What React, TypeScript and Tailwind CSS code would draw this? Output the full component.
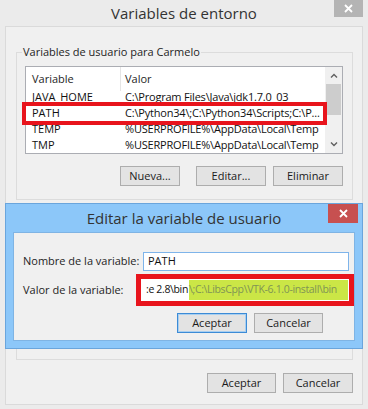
const font = { fontFamily: '"Open Sans", "Noto Sans", sans-serif' };

function WinButton({ label, w, primary }: { label: string; w: string; primary?: boolean }) {
  return (
    <div
      className={`${w} h-[20px] flex items-center justify-center text-[11px] text-[#1b1b1b] bg-[#e3e3e3] border ${
        primary ? "border-[#3c8bd6] shadow-[inset_0_0_0_1px_#a9cff0]" : "border-[#adadad]"
      }`}
    >
      {label}
    </div>
  );
}

function CloseGlyph() {
  return (
    <svg width="9" height="9" viewBox="0 0 9 9">
      <path d="M1 1L8 8M8 1L1 8" stroke="#fff" strokeWidth="1.8" />
    </svg>
  );
}

function ScrollArrow({ up }: { up?: boolean }) {
  return (
    <div className="h-[17px] flex items-center justify-center">
      <svg width="8" height="5" viewBox="0 0 8 5">
        <path d={up ? "M1 4.5L4 1.5L7 4.5" : "M1 0.5L4 3.5L7 0.5"} fill="none" stroke="#606060" strokeWidth="1.4" />
      </svg>
    </div>
  );
}

const rows = [
  { name: "JAVA_HOME", value: "C:\\Program Files\\Java\\jdk1.7.0_03" },
  { name: "PATH", value: "C:\\Python34\\;C:\\Python34\\Scripts;C:\\P..." },
  { name: "TEMP", value: "%USERPROFILE%\\AppData\\Local\\Temp" },
  { name: "TMP", value: "%USERPROFILE%\\AppData\\Local\\Temp" },
];

function VariableList() {
  return (
    <div className="ml-[8px] mt-[13px] w-[318px] h-[88px] border border-[#abadb3] bg-white flex overflow-hidden">
      <div className="flex-1 flex flex-col overflow-hidden">
        <div className="relative z-10 h-[24px] shrink-0 flex items-center bg-white text-[11px] text-[#1e1e1e]">
          <div className="w-[95px] h-full flex items-center pl-[6px] border-r border-[#e5e5e5]">Variable</div>
          <div className="pl-[4px]">Valor</div>
        </div>
        <div className="mt-[-2px] flex flex-col">
          {rows.map((r) => (
            <div key={r.name} className="h-[16px] shrink-0 flex items-center text-[11px] text-[#111] whitespace-nowrap">
              <div className="w-[95px] pl-[6px]">{r.name}</div>
              <div className="pl-[4px] tracking-[-0.2px]">{r.value}</div>
            </div>
          ))}
        </div>
      </div>
      <div className="w-[17px] bg-[#f0f0f0] flex flex-col">
        <ScrollArrow up />
        <div className="h-[31px] mx-[1px] bg-[#cdcdcd]" />
        <div className="flex-1" />
        <ScrollArrow />
      </div>
    </div>
  );
}

function GroupBox({ title, children, className }: { title?: string; children?: React.ReactNode; className: string }) {
  return (
    <div className={`relative ml-[10px] w-[337px] h-[148px] border border-[#dcdcdc] ${className}`}>
      {title && (
        <div className="absolute left-[5px] top-[-9px] px-[1px] bg-[#f0f0f0] text-[11px] text-[#1e1e1e] leading-[16px]">
          {title}
        </div>
      )}
      {children}
    </div>
  );
}

function EditDialog() {
  return (
    <div className="absolute left-[5px] top-[203px] w-[358px] h-[146px] bg-[#8cc7f9] border border-[#6aa5dc] flex flex-col">
      <div className="relative h-[28px] shrink-0 flex items-center justify-center text-[15px] text-[#333]">
        Editar la variable de usuario
        <div className="absolute right-[4px] top-0 w-[30px] h-[19px] bg-[#c75050] flex items-center justify-center">
          <CloseGlyph />
        </div>
      </div>
      <div className="mx-[7px] h-[109px] bg-[#f0f0f0] border border-[#7fb4e4]">
        <div className="flex items-center mt-[19px] h-[19px]">
          <div className="w-[129px] pl-[9px] text-[11px] text-[#1e1e1e]">Nombre de la variable:</div>
          <div className="w-[206px] h-[19px] bg-white border border-[#7eb4ea] flex items-center pl-[4px] text-[11px] text-[#111]">
            PATH
          </div>
        </div>
        <div className="flex items-center mt-[3px] h-[32px]">
          <div className="w-[122px] pl-[9px] text-[11px] text-[#1e1e1e]">Valor de la variable:</div>
          <div className="w-[218px] h-[32px] border-[5px] border-[#e8141c] p-[1px] bg-white">
            <div className="h-full bg-white flex items-center text-[10.5px] tracking-[-0.35px] whitespace-nowrap overflow-hidden">
              <span className="pl-[4px] pr-[1px] text-[#111]">:e 2.8\bin</span>
              <span className="h-full flex-1 flex items-center bg-[#cbe646] text-[#7f9455]">
                \;C:\LibsCpp\VTK-6.1.0-install\bin
              </span>
            </div>
          </div>
        </div>
        <div className="flex justify-end gap-[7px] mt-[7px] pr-[31px]">
          <WinButton label="Aceptar" w="w-[70px]" primary />
          <WinButton label="Cancelar" w="w-[69px]" />
        </div>
      </div>
    </div>
  );
}

export default function App() {
  return (
    <div className="relative w-[368px] h-[409px] bg-[#ebebeb] overflow-hidden" style={font}>
      <div className="relative h-[26px] flex items-center justify-center text-[15px] text-[#333]">
        Variables de entorno
        <div className="absolute right-[5px] top-0 w-[29px] h-[17px] bg-[#b4b4b4] flex items-center justify-center">
          <CloseGlyph />
        </div>
      </div>
      <div className="ml-[5px] w-[358px] h-[379px] bg-[#f0f0f0] border border-[#dadada] flex flex-col">
        <GroupBox title="Variables de usuario para Carmelo" className="mt-[25px]">
          <VariableList />
          <div className="flex justify-end mt-[12px] pr-[9px]">
            <WinButton label="Nueva..." w="w-[60px]" />
            <div className="w-[16px]" />
            <WinButton label="Editar..." w="w-[70px]" />
            <div className="w-[7px]" />
            <WinButton label="Eliminar" w="w-[70px]" />
          </div>
        </GroupBox>
        <GroupBox className="mt-[12px]" />
        <div className="flex justify-end gap-[7px] mt-[13px] pr-[9px]">
          <WinButton label="Aceptar" w="w-[69px]" />
          <WinButton label="Cancelar" w="w-[70px]" />
        </div>
      </div>
      <div className="absolute left-[22px] top-[102px] w-[305px] h-[23px] border-[4px] border-[#e8141c]" />
      <EditDialog />
    </div>
  );
}
